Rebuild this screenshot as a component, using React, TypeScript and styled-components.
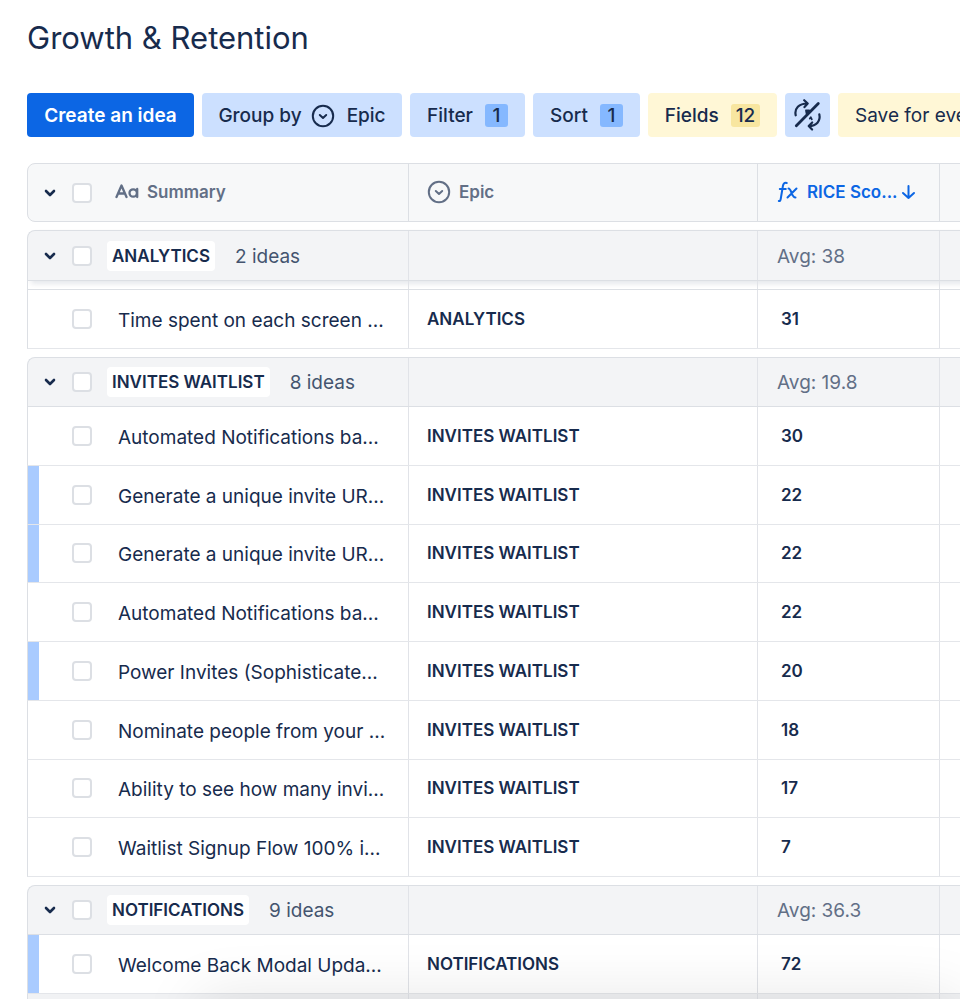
import React from "react";
import styled, { createGlobalStyle, css } from "styled-components";

const GlobalStyle = createGlobalStyle`
  * { box-sizing: border-box; }
  body {
    margin: 0;
    background: #ffffff;
    color: #172b4d;
    font-family: Inter, "Liberation Sans", sans-serif;
    font-size: 19px;
  }
  button, input { font-family: inherit; margin: 0; }
`;

const Page = styled.main`
  height: 100vh;
  padding: 18px 0 0 27px;
  overflow: hidden;
`;

const Title = styled.h1`
  margin: 0;
  font-size: 31px;
  line-height: 40px;
  font-weight: 400;
  white-space: nowrap;
`;

const Toolbar = styled.div`
  display: flex;
  gap: 8px;
  margin: 35px 0 26px;
  white-space: nowrap;
`;

type Tone = "primary" | "blue" | "yellow";
const tones: Record<Tone, { bg: string; fg: string; badge: string }> = {
  primary: { bg: "#0c66e4", fg: "#ffffff", badge: "#85b8ff" },
  blue: { bg: "#cce0ff", fg: "#172b4d", badge: "#85b8ff" },
  yellow: { bg: "#fff7d6", fg: "#172b4d", badge: "#f8e6a0" },
};

const ToolButton = styled.button<{ $tone: Tone; $width?: number; $light?: boolean }>`
  display: flex;
  flex: none;
  align-items: center;
  justify-content: center;
  gap: 12px;
  width: ${(p) => (p.$width ? `${p.$width}px` : "auto")};
  height: 44px;
  padding: ${(p) => (p.$width ? "1px 0 0" : "1px 17px 0")};
  border: 0;
  border-radius: 4px;
  background: ${(p) => tones[p.$tone].bg};
  color: ${(p) => tones[p.$tone].fg};
  font-size: 19px;
  line-height: 24px;
  font-weight: ${(p) => (p.$light ? 400 : p.$tone === "primary" ? 600 : 500)};
  white-space: nowrap;
`;

const GroupLabel = styled.span`
  display: flex;
  align-items: center;
  gap: 9px;
`;

const Badge = styled.span<{ $tone: Tone }>`
  min-width: 23px;
  padding: 0 5px;
  border-radius: 3px;
  background: ${(p) => tones[p.$tone].badge};
  line-height: 23px;
  text-align: center;
`;

const Table = styled.table`
  display: flex;
  flex-direction: column;
  gap: 8px;
  min-width: 1040px;
  text-align: left;
`;

const line = "#dcdfe4";

const rowGrid = css`
  display: grid;
  grid-template-columns: 381px 349px 182px 1fr;
`;

const Head = styled.thead`
  display: block;
  border: 1px solid ${line};
  border-radius: 8px 0 0 8px;
  background: #f7f8f9;
`;

const HeadRow = styled.tr`
  ${rowGrid}
  height: 57px;
`;

const HeadCell = styled.th<{ $active?: boolean; $select?: boolean }>`
  display: flex;
  align-items: center;
  gap: ${(p) => (p.$select ? 0 : 8)}px;
  padding: ${(p) => (p.$select ? "0" : "0 0 2px 18px")};
  border-right: 1px solid ${line};
  color: ${(p) => (p.$active ? "#0c66e4" : "#626f86")};
  font-size: 17px;
  font-weight: 600;
  white-space: nowrap;
`;

const SortLabel = styled.span`
  display: flex;
  align-items: center;
  gap: 4px;
`;

const Group = styled.tbody<{ $height?: number; $raised?: boolean }>`
  display: grid;
  grid-template-rows: ${(p) => (p.$raised ? "51px 8px" : "50px")};
  grid-auto-rows: minmax(58px, 1fr);
  min-height: ${(p) => (p.$height ? `${p.$height}px` : "auto")};
`;

const GroupRow = styled.tr<{ $raised?: boolean }>`
  ${rowGrid}
  border: 1px solid ${line};
  border-right: 0;
  border-radius: 8px 0 0 0;
  background: #f3f4f6;
  box-shadow: ${(p) => (p.$raised ? "4px 3px 5px rgba(9, 30, 66, 0.1)" : "none")};
`;

const GapRow = styled.tr`
  ${rowGrid}
  border-left: 1px solid ${line};
`;

const IdeaRow = styled.tr<{ $marked?: boolean; $spaced?: boolean }>`
  ${rowGrid}
  border-left: 1px solid ${line};
  border-bottom: 1px solid #e4e6ea;
  border-top: ${(p) => (p.$spaced ? `1px solid ${line}` : "0")};
  box-shadow: ${(p) => (p.$marked ? "inset 11px 0 #a9cbff" : "none")};
`;

const Cell = styled.td<{ $lead?: number }>`
  display: flex;
  align-items: center;
  min-width: 0;
  padding: 0 0 0 ${(p) => p.$lead ?? 18}px;
  border-right: 1px solid #e1e3e8;
  white-space: nowrap;
`;

const Footer = styled.tfoot`
  display: block;
  margin-top: -8px;
`;

const FooterRow = styled.tr`
  ${rowGrid}
  height: 50px;
  border-left: 1px solid ${line};
  background: #f1f2f4;
`;

const Toggle = styled.button`
  display: grid;
  place-items: center;
  width: 24px;
  height: 24px;
  margin-left: 10px;
  padding: 0;
  border: 0;
  background: transparent;
  color: #172b4d;
`;

const Check = styled.input<{ $indent?: boolean }>`
  appearance: none;
  flex: none;
  width: 20px;
  height: 20px;
  margin: 0 0 0 ${(p) => (p.$indent ? 44 : 10)}px;
  border: 2px solid #dcdfe4;
  border-radius: 4px;
  background: #ffffff;
`;

const SummaryHead = styled.span`
  display: flex;
  align-items: center;
  gap: 8px;
  margin-left: 23px;
  padding-bottom: 2px;
`;

const Chip = styled.span`
  margin-left: 15px;
  padding: 0 5px;
  border-radius: 4px;
  background: #ffffff;
  font-size: 17px;
  line-height: 30px;
  font-weight: 600;
`;

const Count = styled.span`
  margin-left: 20px;
  padding-top: 1px;
  color: #44546f;
`;

const Average = styled.span`
  padding-top: 1px;
  color: #626f86;
`;

const IdeaLink = styled.a`
  margin-left: 26px;
  padding-top: 3px;
  color: #172b4d;
  text-decoration: none;
`;

const Strong = styled.span`
  font-size: 17px;
  font-weight: 600;
`;

const BottomShade = styled.div`
  position: fixed;
  top: 100%;
  left: 200px;
  right: 0;
  height: 60px;
  box-shadow: 0 0 60px 2px rgba(0, 0, 0, 0.1);
  pointer-events: none;
`;

const Chevron = () => (
  <svg width="12" height="8" viewBox="0 0 12 8" fill="none" stroke="currentColor" strokeWidth="2.6" strokeLinecap="round" strokeLinejoin="round" aria-hidden="true">
    <path d="M2 2l4 4 4-4" />
  </svg>
);

const CircleChevron = () => (
  <svg width="24" height="24" viewBox="0 0 24 24" fill="none" stroke="currentColor" strokeWidth="2" strokeLinecap="round" strokeLinejoin="round" aria-hidden="true">
    <circle cx="12" cy="12" r="10.2" />
    <path d="M8.800 11L12 13.900l3.200-2.900" />
  </svg>
);

const AutoSaveOff = () => (
  <svg width="32" height="34" viewBox="0 0 32 34" fill="none" stroke="currentColor" strokeWidth="2.2" strokeLinecap="round" strokeLinejoin="round" aria-hidden="true">
    <path d="M3.700 16.300C2.200 9.500 7 4.400 15.500 4.500M12.200 1.200l3.500 3.300-3.200 3.600" />
    <path d="M27.300 15.300C28.800 22 24.500 27 16.800 27M20.200 23.500L16.700 27l3.400 3.500" />
    <path d="M4.300 26.700L26.300 4.500" strokeWidth="2.800" />
    <path d="M14 11.500h3.200l-2.600 3zM17.800 19.500l1-1.200 1 2" strokeWidth="1.800" />
  </svg>
);

const TextIcon = () => (
  <svg width="24" height="16" viewBox="0 0 24 16" fill="none" stroke="currentColor" strokeWidth="2.300" strokeLinecap="round" strokeLinejoin="round" aria-hidden="true">
    <path d="M1.500 13L6.500 1.500l5 11.500M3.200 9.500h6.600" />
    <circle cx="18.200" cy="9" r="3.700" />
    <path d="M22.200 5v8" />
  </svg>
);

const FormulaIcon = () => (
  <svg width="23" height="22" viewBox="0 0 23 22" fill="none" stroke="currentColor" strokeWidth="2" strokeLinecap="round" strokeLinejoin="round" aria-hidden="true">
    <path d="M10.800 2C8.100 1.400 7.300 2.700 6.900 5L4.800 17.500C4.500 19.500 4 20.200 2.800 20M3.800 8h6M12.500 7.500c3 0 3 9 7 9M20.500 7.500l-9 9" />
  </svg>
);

const ArrowDown = () => (
  <svg width="15" height="16" viewBox="0 0 15 16" fill="none" stroke="currentColor" strokeWidth="2" strokeLinecap="round" strokeLinejoin="round" aria-hidden="true">
    <path d="M7.500 2v12M2 9l5.500 5L13 9" />
  </svg>
);

type Idea = { title: string; score: number; marked?: boolean };
type IdeaGroup = { name: string; count: number; average: string; height?: number; raised?: boolean; ideas: Idea[] };

const groups: IdeaGroup[] = [
  {
    name: "ANALYTICS", count: 2, average: "38", raised: true, height: 119,
    ideas: [{ title: "Time spent on each screen ...", score: 31 }],
  },
  {
    name: "INVITES WAITLIST", count: 8, average: "19.8", height: 520,
    ideas: [
      { title: "Automated Notifications ba...", score: 30 },
      { title: "Generate a unique invite UR...", score: 22, marked: true },
      { title: "Generate a unique invite UR...", score: 22, marked: true },
      { title: "Automated Notifications ba...", score: 22 },
      { title: "Power Invites (Sophisticate...", score: 20, marked: true },
      { title: "Nominate people from your ...", score: 18 },
      { title: "Ability to see how many invi...", score: 17 },
      { title: "Waitlist Signup Flow 100% i...", score: 7 },
    ],
  },
  {
    name: "NOTIFICATIONS", count: 9, average: "36.3", height: 109,
    ideas: [{ title: "Welcome Back Modal Upda...", score: 72, marked: true }],
  },
];

export default function App() {
  return (
    <>
      <GlobalStyle />
      <Page>
        <Title>Growth &amp; Retention</Title>
        <Toolbar role="toolbar" aria-label="View options">
          <ToolButton $tone="primary" $width={167}>Create an idea</ToolButton>
          <ToolButton $tone="blue" $width={200}>
            <GroupLabel>Group by <CircleChevron /></GroupLabel>Epic
          </ToolButton>
          <ToolButton $tone="blue" $width={115}>Filter <Badge $tone="blue">1</Badge></ToolButton>
          <ToolButton $tone="blue" $width={107}>Sort <Badge $tone="blue">1</Badge></ToolButton>
          <ToolButton $tone="yellow" $width={129}>Fields <Badge $tone="yellow">12</Badge></ToolButton>
          <ToolButton $tone="blue" $width={45} aria-label="Autosave off"><AutoSaveOff /></ToolButton>
          <ToolButton $tone="yellow" $light>Save for everyone</ToolButton>
        </Toolbar>
        <Table>
          <Head>
            <HeadRow>
              <HeadCell $select>
                <Toggle aria-label="Collapse all groups"><Chevron /></Toggle>
                <Check type="checkbox" aria-label="Select all ideas" />
                <SummaryHead><TextIcon />Summary</SummaryHead>
              </HeadCell>
              <HeadCell><CircleChevron />Epic</HeadCell>
              <HeadCell $active>
                <FormulaIcon />
                <SortLabel>RICE Sco...<ArrowDown /></SortLabel>
              </HeadCell>
            </HeadRow>
          </Head>
          {groups.map((group) => (
            <Group key={group.name} $height={group.height} $raised={group.raised}>
              <GroupRow $raised={group.raised}>
                <Cell $lead={0}>
                  <Toggle aria-label={`Collapse ${group.name}`} aria-expanded="true"><Chevron /></Toggle>
                  <Check type="checkbox" aria-label={`Select all in ${group.name}`} />
                  <Chip>{group.name}</Chip>
                  <Count>{group.count} ideas</Count>
                </Cell>
                <Cell />
                <Cell $lead={19}><Average>Avg: {group.average}</Average></Cell>
              </GroupRow>
              {group.raised && (
                <GapRow aria-hidden="true">
                  <Cell />
                  <Cell />
                  <Cell />
                </GapRow>
              )}
              {group.ideas.map((idea, i) => (
                <IdeaRow key={i} $marked={idea.marked} $spaced={group.raised}>
                  <Cell $lead={0}>
                    <Check type="checkbox" $indent aria-label={`Select ${idea.title}`} />
                    <IdeaLink href="#idea">{idea.title}</IdeaLink>
                  </Cell>
                  <Cell><Strong>{group.name}</Strong></Cell>
                  <Cell $lead={23}><Strong>{idea.score}</Strong></Cell>
                </IdeaRow>
              ))}
            </Group>
          ))}
          <Footer>
            <FooterRow>
              <Cell />
              <Cell />
              <Cell />
            </FooterRow>
          </Footer>
        </Table>
      </Page>
      <BottomShade />
    </>
  );
}
